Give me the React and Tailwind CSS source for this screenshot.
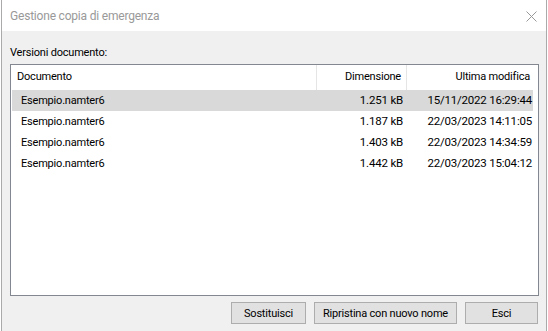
import React from 'react';

const rows = [
    { name: "Esempio.namter6", size: "1.251 kB", date: "15/11/2022 16:29:44" },
    { name: "Esempio.namter6", size: "1.187 kB", date: "22/03/2023 14:11:05" },
    { name: "Esempio.namter6", size: "1.403 kB", date: "22/03/2023 14:34:59" },
    { name: "Esempio.namter6", size: "1.442 kB", date: "22/03/2023 15:04:12" },
]

const Btn = ({ label, w }) => {
    return (
        <button className={`${w} h-[22px] bg-[#e1e1e1] border border-[#adadad] text-black leading-none whitespace-nowrap`}>
            {label}
        </button>
    )
}

const App = () => {
    return (
        <div className='w-[548px] h-[331px] bg-white overflow-hidden flex text-[11px] tracking-[-0.2px] text-black' style={{ fontFamily: 'Roboto, "Noto Sans", sans-serif' }}>
            <div className='ml-[1px] w-[546px] h-full border-x border-[#aaaaaa] bg-[#f0f0f0] flex flex-col'>
                {/* title bar */}
                <div className='h-[31px] bg-white flex items-center justify-between pl-[8px] pr-[9px]'>
                    <span className='text-[#999999] text-[12px]'>Gestione copia di emergenza</span>
                    <svg width="11" height="11" viewBox="0 0 11 11" className='mt-[1px]'>
                        <path d="M0.5 0.5 L10.5 10.5 M10.5 0.5 L0.5 10.5" stroke="#999999" strokeWidth="1" />
                    </svg>
                </div>

                <div className='pl-[8px] pr-[7px] pt-[14px] flex flex-col'>
                    <div className='h-[16px] leading-[16px]'>Versioni documento:</div>

                    <div className='mt-[3px] h-[232px] border border-[#828790] bg-white p-[1px] pt-0'>
                        <div className='flex h-[25px] items-center'>
                            <div className='w-[305px] h-full flex items-center pl-[5px] border-r border-[#e5e5e5]'>Documento</div>
                            <div className='w-[90px] h-full flex items-center justify-end pr-[5px] border-r border-[#e5e5e5]'>Dimensione</div>
                            <div className='w-[126px] h-full flex items-center justify-end pr-[3px]'>Ultima modifica</div>
                        </div>
                        {rows.map((r, i) => (
                            <div key={i} className={i === 0 ? 'flex h-[21px] items-center bg-[#d9d9d9] w-[521px]' : 'flex h-[21px] items-center w-[521px]'}>
                                <div className='w-[305px] pl-[9px] pt-[1px]'>{r.name}</div>
                                <div className='w-[90px] text-right pr-[4px] pt-[1px] text-[11.5px]'>{r.size}</div>
                                <div className='w-[126px] text-right pr-[1px] pt-[1px] text-[11.5px]'>{r.date}</div>
                            </div>
                        ))}
                    </div>

                    <div className='mt-[6px] flex justify-end gap-[8px] pr-[1px]'>
                        <Btn label="Sostituisci" w="w-[75px]" />
                        <Btn label="Ripristina con nuovo nome" w="w-[143px]" />
                        <Btn label="Esci" w="w-[73px]" />
                    </div>
                </div>
            </div>
        </div>
    );
};

export default App;
